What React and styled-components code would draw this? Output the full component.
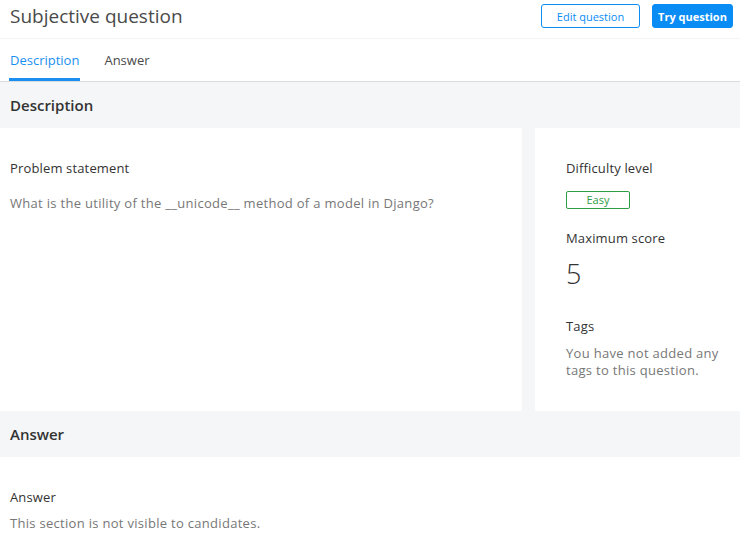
import styled, { createGlobalStyle } from "styled-components";

const GlobalStyle = createGlobalStyle`
  body {
    margin: 0;
    font-family: "Open Sans", Lato, sans-serif;
    background: #fff;
    color: #333;
  }
`;

const Page = styled.div`
  width: 740px;
  height: 538px;
  overflow: hidden;
  display: flex;
  flex-direction: column;
`;

const Header = styled.header`
  height: 38px;
  display: flex;
  align-items: center;
  justify-content: space-between;
  padding: 0 7px 0 10px;
  border-bottom: 1px solid #f2f4f7;
`;

const Title = styled.h1`
  margin: 0;
  margin-top: -7px;
  font-size: 19px;
  font-weight: 400;
  color: #4a4a4a;
`;

const Actions = styled.div`
  display: flex;
  gap: 12px;
  margin-top: -6px;
`;

const Button = styled.button`
  height: 24px;
  width: ${(p) => (p.$primary ? "81px" : "99px")};
  padding: 0;
  border-radius: 3px;
  font-family: inherit;
  font-size: 11px;
  font-weight: ${(p) => (p.$primary ? 700 : 400)};
  border: 1px solid #0a8cf5;
  background: ${(p) => (p.$primary ? "#0a8cf5" : "#fff")};
  color: ${(p) => (p.$primary ? "#fff" : "#0a8cf5")};
`;

const Tabs = styled.nav`
  height: 42px;
  display: flex;
  gap: 23px;
  padding: 0 9px;
  border-bottom: 1px solid #d7dce3;
`;

const Tab = styled.div`
  display: flex;
  align-items: center;
  padding: 3px 1px 0;
  font-size: 13px;
  color: ${(p) => (p.$active ? "#1a8ff0" : "#4a4a4a")};
  border-bottom: 3px solid ${(p) => (p.$active ? "#1a8ff0" : "transparent")};
`;

const SectionHead = styled.div`
  height: 46px;
  display: flex;
  align-items: center;
  padding: 0 10px;
  background: #f5f6f8;
  font-size: 15px;
  font-weight: 600;
  color: #333;
`;

const Columns = styled.div`
  display: grid;
  grid-template-columns: 522px 1fr;
  gap: 13px;
  background: #f5f6f8;
`;

const Card = styled.div`
  background: #fff;
  height: 283px;
  padding: ${(p) => p.$pad || "31px 10px"};
  box-sizing: border-box;
`;

const Label = styled.div`
  font-size: 13px;
  letter-spacing: 0.15px;
  color: #333;
  line-height: 18px;
  margin-bottom: ${(p) => p.$mb || "0"};
`;

const Muted = styled.div`
  font-size: 13px;
  letter-spacing: 0.3px;
  line-height: 17px;
  color: #777;
  margin-bottom: ${(p) => p.$mb || "0"};
`;

const Badge = styled.span`
  display: inline-flex;
  align-items: center;
  justify-content: center;
  width: 64px;
  height: 18px;
  box-sizing: border-box;
  border: 1px solid #2e9e45;
  border-radius: 2px;
  color: #2e9e45;
  font-size: 11px;
  margin-bottom: 20px;
`;

const Score = styled.div`
  font-size: 27px;
  font-weight: 300;
  color: #333;
  line-height: 34px;
  margin-bottom: 26px;
`;

const AnswerBody = styled.div`
  padding: 31px 10px 0;
  background: #fff;
`;

export default function App() {
  return (
    <Page>
      <GlobalStyle />
      <Header>
        <Title>Subjective question</Title>
        <Actions>
          <Button>Edit question</Button>
          <Button $primary>Try question</Button>
        </Actions>
      </Header>
      <Tabs>
        <Tab $active>Description</Tab>
        <Tab>Answer</Tab>
      </Tabs>
      <SectionHead>Description</SectionHead>
      <Columns>
        <Card>
          <Label $mb="18px">Problem statement</Label>
          <Muted>What is the utility of the __unicode__ method of a model in Django?</Muted>
        </Card>
        <Card $pad="31px 12px 0 31px">
          <Label $mb="10px">Difficulty level</Label>
          <Badge>Easy</Badge>
          <Label $mb="10px">Maximum score</Label>
          <Score>5</Score>
          <Label $mb="10px">Tags</Label>
          <Muted>You have not added any tags to this question.</Muted>
        </Card>
      </Columns>
      <SectionHead>Answer</SectionHead>
      <AnswerBody>
        <Label $mb="9px">Answer</Label>
        <Muted>This section is not visible to candidates.</Muted>
      </AnswerBody>
    </Page>
  );
}
